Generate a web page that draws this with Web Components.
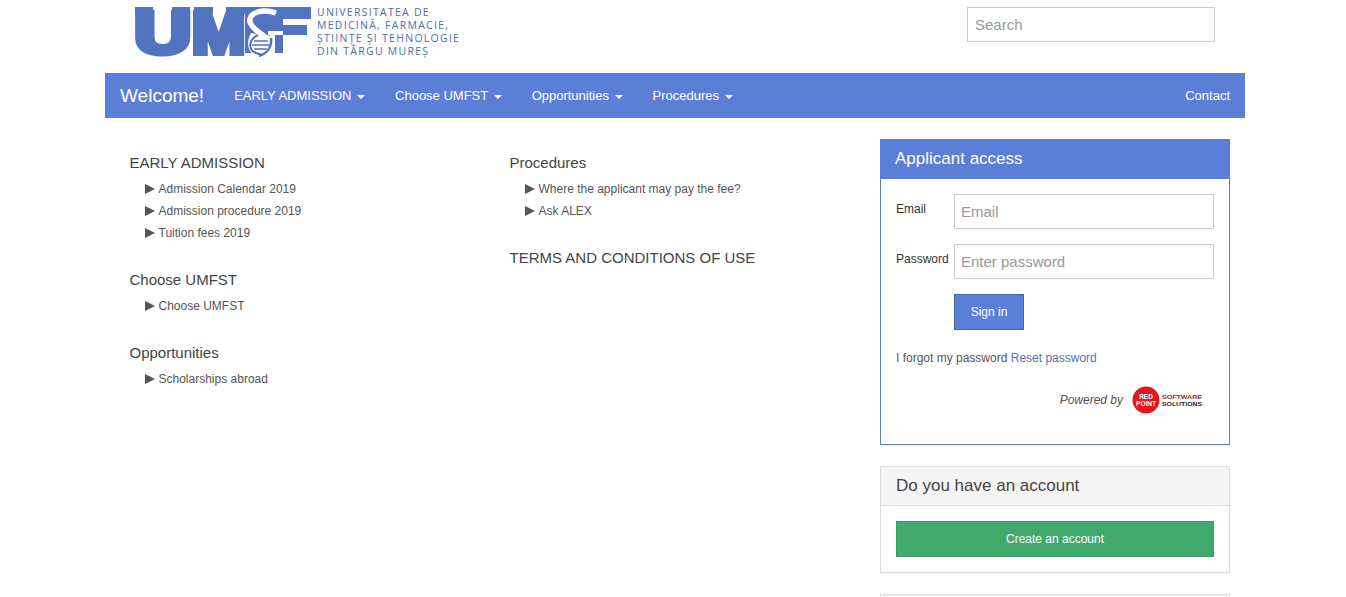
<!DOCTYPE html>
<html lang="en">
<head>
<meta charset="utf-8">
<title>UMFST admission</title>
<style>
  html, body { margin: 0; height: 597px; overflow: hidden; background: #fff; }
  body { font-family: "Liberation Sans", Arial, sans-serif; color: #333; }
</style>
</head>
<body>
<admission-page>
  <site-header></site-header>
  <site-navbar>
    <nav-link caret>EARLY ADMISSION</nav-link>
    <nav-link caret>Choose UMFST</nav-link>
    <nav-link caret>Opportunities</nav-link>
    <nav-link caret>Procedures</nav-link>
    <nav-link slot="right">Contact</nav-link>
  </site-navbar>
  <div slot="col1">
    <link-group title="EARLY ADMISSION">
      <link-item>Admission Calendar 2019</link-item>
      <link-item>Admission procedure 2019</link-item>
      <link-item>Tuition fees 2019</link-item>
    </link-group>
    <link-group title="Choose UMFST">
      <link-item>Choose UMFST</link-item>
    </link-group>
    <link-group title="Opportunities">
      <link-item>Scholarships abroad</link-item>
    </link-group>
  </div>
  <div slot="col2">
    <link-group title="Procedures">
      <link-item>Where the applicant may pay the fee?</link-item>
      <link-item>Ask ALEX</link-item>
    </link-group>
    <link-group title="TERMS AND CONDITIONS OF USE"></link-group>
  </div>
  <div slot="col3">
    <side-panel title="Applicant access" kind="primary"><login-form></login-form></side-panel>
    <side-panel title="Do you have an account"><action-button kind="green" wide>Create an account</action-button></side-panel>
    <side-panel></side-panel>
  </div>
</admission-page>

<script>
function shadow(el, html) {
  el.attachShadow({ mode: "open" }).innerHTML = html;
}

class AdmissionPage extends HTMLElement {
  connectedCallback() {
    shadow(this, `
      <style>
        :host { display: block; width: 1140px; margin-left: 105px; }
        .row { display: grid; grid-template-columns: 380px 380px 380px; }
        .col1 { padding: 35px 0 0 24.5px; }
        .col2 { padding: 35px 0 0 24.5px; }
        .col3 { padding: 21px 15px 0 15px; }
      </style>
      <slot></slot>
      <div class="row">
        <div class="col1"><slot name="col1"></slot></div>
        <div class="col2"><slot name="col2"></slot></div>
        <div class="col3"><slot name="col3"></slot></div>
      </div>`);
  }
}

class SiteHeader extends HTMLElement {
  connectedCallback() {
    shadow(this, `
      <style>
        :host { display: flex; justify-content: space-between; height: 73px; padding: 0 30px 0 25px; box-sizing: border-box; }
        .brand { display: flex; }
        svg { display: block; width: 185px; height: 66px; }
        .name { margin: 6px 0 0 2px; color: #4c6cb4; font: 10.5px/13px "Open Sans", sans-serif; letter-spacing: 1.27px; white-space: nowrap; }
        input { box-sizing: border-box; width: 248px; height: 35px; margin: 7px 0 0; padding: 0 7px; border: 1px solid #ccc; font: 15px "Liberation Sans", Arial, sans-serif; outline: 0; }
        input::placeholder { color: #999; opacity: 1; }
      </style>
      <div class="brand">
        <svg viewBox="130 0 185 66" aria-hidden="true">
          <g fill="#5173c0" stroke="#5173c0" stroke-width="6" font-family="Liberation Sans" font-weight="700" font-size="58">
            <text transform="translate(134.5 52.5) scale(1.35 1)">U</text>
            <text transform="translate(192 52.5) scale(1.1 1)">M</text>
          </g>
          <path d="M135 7H153V14H135ZM172 7H190V14H172ZM194 7H213V14H194ZM226 7H245V14H226Z" fill="#5173c0"/>
          <path d="M245 7H311V19H283V25H307V35H283V53H245Z" fill="#5173c0"/>
          <path d="M251 33C246 42 247 52 256 56H272V36Z" fill="#fff"/>
          <path d="M268 31H283V35H268ZM270 35H275V53H270Z" fill="#fff"/>
          <path d="M276 13C262 8 248 13 250 22C252 31 268 35 270 45" fill="none" stroke="#fff" stroke-width="5.5"/>
          <path d="M258 35C251 38 249 44 251 49C253 53 258 54 263 55" fill="none" stroke="#5173c0" stroke-width="2"/>
          <path d="M271 38C272 46 268 53 259 56" fill="none" stroke="#5173c0" stroke-width="2.5"/>
          <path d="M254 41H268M252 45H270M254 49H267" stroke="#5173c0" stroke-width="1.7"/>
        </svg>
        <div class="name">UNIVERSITATEA DE<br>MEDICINĂ, FARMACIE,<br>ȘTIINȚE ȘI TEHNOLOGIE<br>DIN TÂRGU MUREȘ</div>
      </div>
      <input type="text" placeholder="Search">`);
  }
}

class SiteNavbar extends HTMLElement {
  connectedCallback() {
    shadow(this, `
      <style>
        :host { display: flex; height: 45px; background: #5b7fd7; color: #fff; }
        .brand { padding: 0 15px; font-size: 19px; line-height: 45px; }
        .right { margin-left: auto; }
        .items { display: flex; }
      </style>
      <div class="brand">Welcome!</div>
      <div class="items"><slot></slot></div>
      <div class="items right"><slot name="right"></slot></div>`);
  }
}

class NavLink extends HTMLElement {
  connectedCallback() {
    shadow(this, `
      <style>
        :host { display: block; padding: 0 15px; font-size: 13px; line-height: 45px; white-space: nowrap; }
        .caret { display: ${this.hasAttribute("caret") ? "inline-block" : "none"}; margin-left: 2px; vertical-align: middle;
                 border-top: 4px solid #fff; border-left: 4px solid transparent; border-right: 4px solid transparent; }
      </style>
      <slot></slot> <span class="caret"></span>`);
  }
}

class LinkGroup extends HTMLElement {
  connectedCallback() {
    shadow(this, `
      <style>
        :host { display: block; margin-bottom: 26px; }
        h3 { margin: 0 0 5px; font-size: 15px; font-weight: 400; line-height: 20px; color: #444; }
        .items { display: block; }
      </style>
      <h3>${this.getAttribute("title")}</h3>
      <div class="items"><slot></slot></div>`);
    this.removeAttribute("title");
  }
}

class LinkItem extends HTMLElement {
  connectedCallback() {
    shadow(this, `
      <style>
        :host { display: flex; align-items: center; height: 22px; padding-left: 15.5px; font-size: 12px; color: #555; }
        i { width: 0; height: 0; margin-right: 3.5px; border-left: 10px solid #555; border-top: 5px solid transparent; border-bottom: 5px solid transparent; }
      </style>
      <i></i><slot></slot>`);
  }
}

class SidePanel extends HTMLElement {
  connectedCallback() {
    const primary = this.getAttribute("kind") == "primary";
    const title = this.getAttribute("title") || "";
    this.removeAttribute("title");
    shadow(this, `
      <style>
        :host { display: block; box-sizing: border-box; margin-bottom: 21px; border: 1px solid ${primary ? "#5d7eb8" : "#ddd"}; box-shadow: 0 1px 1px rgba(0,0,0,.05); }
        .head { box-sizing: border-box; height: ${primary ? 40 : 39}px; margin: ${primary ? "-1px -1px 0" : 0}; padding: 0 15px; font-size: 17px; line-height: ${primary ? 39 : 37}px;
                background: ${primary ? "#5b7fd7" : "#f5f5f5"}; color: ${primary ? "#fff" : "#444"}; border-bottom: 1px solid ${primary ? "#5b7fd7" : "#ddd"}; }
        .body { padding: 15px; }
      </style>
      <div class="head">${title}</div>
      <div class="body"><slot></slot></div>`);
  }
}

class ActionButton extends HTMLElement {
  connectedCallback() {
    const green = this.getAttribute("kind") == "green";
    shadow(this, `
      <style>
        :host { display: ${this.hasAttribute("wide") ? "flex" : "inline-flex"}; align-items: center; justify-content: center; box-sizing: border-box;
                width: ${this.hasAttribute("wide") ? "100%" : "70px"}; height: 36px; font-size: 12px; color: #fff;
                background: ${green ? "#41a96b" : "#5b7fd7"}; border: 1px solid ${green ? "#3b9c62" : "#3c66a8"}; }
      </style>
      <slot></slot>`);
  }
}

class LoginForm extends HTMLElement {
  connectedCallback() {
    shadow(this, `
      <style>
        :host { display: block; height: 235px; font-size: 12px; }
        .grid { display: grid; grid-template-columns: 58px 260px; row-gap: 15px; }
        label { padding-top: 7px; line-height: 17px; color: #333; }
        input { box-sizing: border-box; width: 100%; height: 35px; padding: 0 6px; border: 1px solid #ccc; font: 15px "Liberation Sans", Arial, sans-serif; outline: 0; }
        input::placeholder { color: #999; opacity: 1; }
        .forgot { margin-top: 20px; line-height: 17px; color: #555; }
        a { color: #5a70b4; }
        .powered { display: flex; justify-content: flex-end; align-items: center; gap: 9px; margin: 18px 10px 0 0; font-style: italic; color: #555; }
        svg { display: block; width: 72px; height: 30px; font-style: normal; }
        text { font-family: "Liberation Sans"; font-weight: 700; }
      </style>
      <div class="grid">
        <label>Email</label><input type="text" placeholder="Email">
        <label>Password</label><input type="password" placeholder="Enter password">
        <span></span><div><action-button>Sign in</action-button></div>
      </div>
      <div class="forgot">I forgot my password <a>Reset password</a></div>
      <div class="powered">Powered by
        <svg viewBox="0 0 72 30">
          <circle cx="14" cy="15" r="13.5" fill="#e2161c"/>
          <text x="14" y="13.5" text-anchor="middle" font-size="6.5" fill="#fff">RED</text>
          <text x="14" y="20.5" text-anchor="middle" font-size="6.5" fill="#fff">POINT</text>
          <text x="30" y="13.5" font-size="6" fill="#8e2b2f" textLength="40" lengthAdjust="spacingAndGlyphs">SOFTWARE</text>
          <text x="30" y="20.5" font-size="6" fill="#222" textLength="40" lengthAdjust="spacingAndGlyphs">SOLUTIONS</text>
        </svg>
      </div>`);
  }
}

customElements.define("action-button", ActionButton);
customElements.define("nav-link", NavLink);
customElements.define("link-item", LinkItem);
customElements.define("link-group", LinkGroup);
customElements.define("login-form", LoginForm);
customElements.define("side-panel", SidePanel);
customElements.define("site-navbar", SiteNavbar);
customElements.define("site-header", SiteHeader);
customElements.define("admission-page", AdmissionPage);
</script>
</body>
</html>
